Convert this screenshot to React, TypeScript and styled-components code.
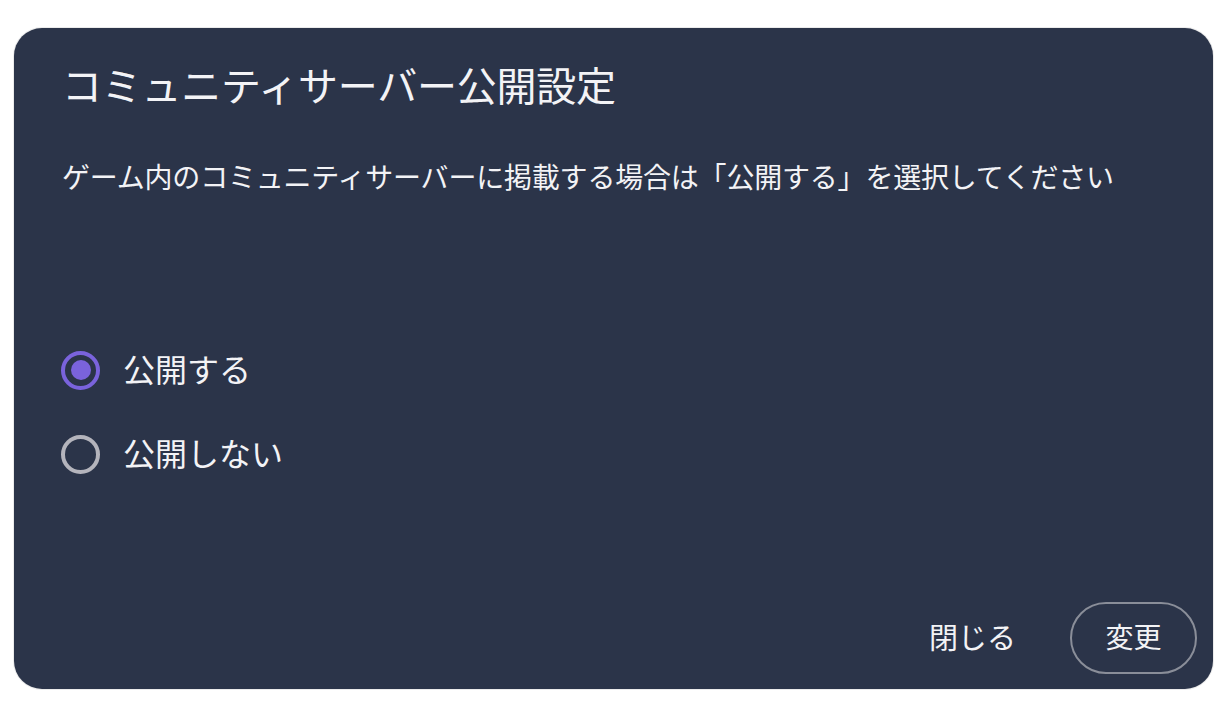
import React, { useState } from 'react';
import styled, { createGlobalStyle } from 'styled-components';

const GlobalStyle = createGlobalStyle`
	html, body {
		margin: 0;
		padding: 0;
		background: #ffffff;
	}
	body {
		font-family: 'Noto Sans CJK JP', 'Noto Sans', sans-serif;
	}
`;

const options = [
	{ value: 'public', label: '公開する' },
	{ value: 'private', label: '公開しない' },
];

const App = () => {
	const [selected, setSelected] = useState('public');

	return (
		<>
			<GlobalStyle />
			<Page>
				<Dialog>
					<Title>コミュニティサーバー公開設定</Title>
					<Description>ゲーム内のコミュニティサーバーに掲載する場合は「公開する」を選択してください</Description>
					<RadioGroup>
						{options.map((o) => (
							<RadioRow key={o.value} onClick={() => setSelected(o.value)}>
								<RadioMark $checked={selected === o.value} />
								<RadioLabel>{o.label}</RadioLabel>
							</RadioRow>
						))}
					</RadioGroup>
					<Footer>
						<TextButton>閉じる</TextButton>
						<OutlineButton>変更</OutlineButton>
					</Footer>
				</Dialog>
			</Page>
		</>
	);
};

const Page = styled.div`
	width: 1228px;
	height: 710px;
	box-sizing: border-box;
	padding: 28px 15px 21px 14px;
`;

const Dialog = styled.section`
	box-sizing: border-box;
	height: 100%;
	display: flex;
	flex-direction: column;
	padding: 32px 16px 15px 48px;
	background: #2b3449;
	border-radius: 28px;
	box-shadow: 0 0 0 1px rgba(0, 0, 0, 0.08);
	color: #f3f3f6;
`;

const Title = styled.h2`
	margin: 0;
	font-size: 40px;
	line-height: 48px;
	font-weight: 400;
	letter-spacing: -0.25px;
`;

const Description = styled.p`
	margin: 48px 0 0;
	font-size: 28px;
	line-height: 40px;
	letter-spacing: -0.2px;
`;

const RadioGroup = styled.div`
	display: flex;
	flex-direction: column;
	gap: 28px;
	margin-top: 146px;
`;

const RadioRow = styled.label`
	display: flex;
	align-items: center;
	gap: 23px;
	height: 56px;
	cursor: pointer;
`;

const RadioMark = styled.span<{ $checked: boolean }>`
	position: relative;
	box-sizing: border-box;
	width: 39px;
	height: 39px;
	margin-left: -1px;
	border-radius: 50%;
	border: 4px solid ${(p) => (p.$checked ? '#7a63dc' : '#b4b4bc')};
	&::after {
		content: '';
		display: ${(p) => (p.$checked ? 'block' : 'none')};
		position: absolute;
		top: 50%;
		left: 50%;
		width: 20px;
		height: 20px;
		border-radius: 50%;
		background: #7a63dc;
		transform: translate(-50%, -50%);
	}
`;

const RadioLabel = styled.span`
	font-size: 32px;
	line-height: 40px;
	margin-bottom: 5px;
`;

const Footer = styled.div`
	margin-top: auto;
	display: flex;
	justify-content: flex-end;
	align-items: center;
	gap: 30px;
`;

const TextButton = styled.button`
	height: 72px;
	padding: 0 24px 4px;
	border: none;
	background: transparent;
	color: #f3f3f6;
	font-family: inherit;
	font-size: 29px;
	cursor: pointer;
`;

const OutlineButton = styled.button`
	box-sizing: border-box;
	width: 127px;
	height: 72px;
	padding: 0 0 4px;
	border: 2px solid #8a8e99;
	border-radius: 36px;
	background: transparent;
	color: #f3f3f6;
	font-family: inherit;
	font-size: 28px;
	cursor: pointer;
`;

export default App;
